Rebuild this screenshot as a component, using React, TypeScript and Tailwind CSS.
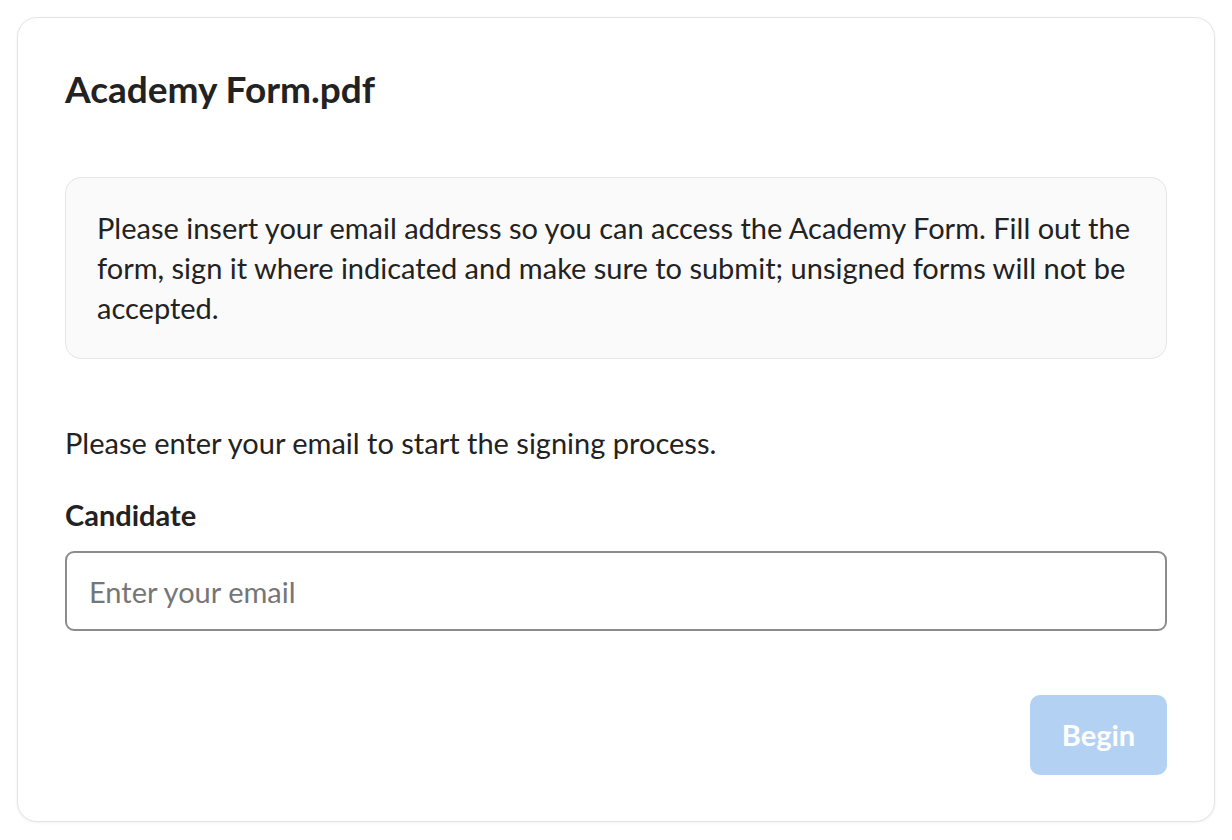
export default function App() {
  return (
    <div className="min-h-screen bg-white p-[17px] font-['Lato','Noto_Sans',sans-serif] text-[#222222]">
      <div className="rounded-[20px] border border-[#e4e4e4] bg-white px-[47px] pt-[47px] pb-[46px] shadow-[0_1px_3px_rgba(0,0,0,0.06)]">
        <h1 className="text-[37px] font-bold leading-[48px]">Academy Form.pdf</h1>

        <div className="mt-16 rounded-2xl border border-[#e6e6e6] bg-[#fafafa] px-[31px] py-[30px] text-[29px] leading-[40px]">
          Please insert your email address so you can access the Academy Form. Fill out the form, sign it where indicated and make sure to submit; unsigned forms will not be accepted.
        </div>

        <p className="mt-16 text-[29px] leading-[40px]">Please enter your email to start the signing process.</p>

        <label className="mt-8 block text-[29px] font-bold leading-[40px]">Candidate</label>
        <input
          type="email"
          placeholder="Enter your email"
          className="mt-4 block h-20 w-full rounded-[9px] border-2 border-[#8c8c8c] bg-white px-[22px] text-[29px] outline-none placeholder:text-[#767676]"
        />

        <div className="mt-16 flex justify-end">
          <button className="h-20 w-[137px] rounded-[10px] bg-[#b3d2f3] text-[29px] font-bold text-white">
            Begin
          </button>
        </div>
      </div>
    </div>
  )
}
